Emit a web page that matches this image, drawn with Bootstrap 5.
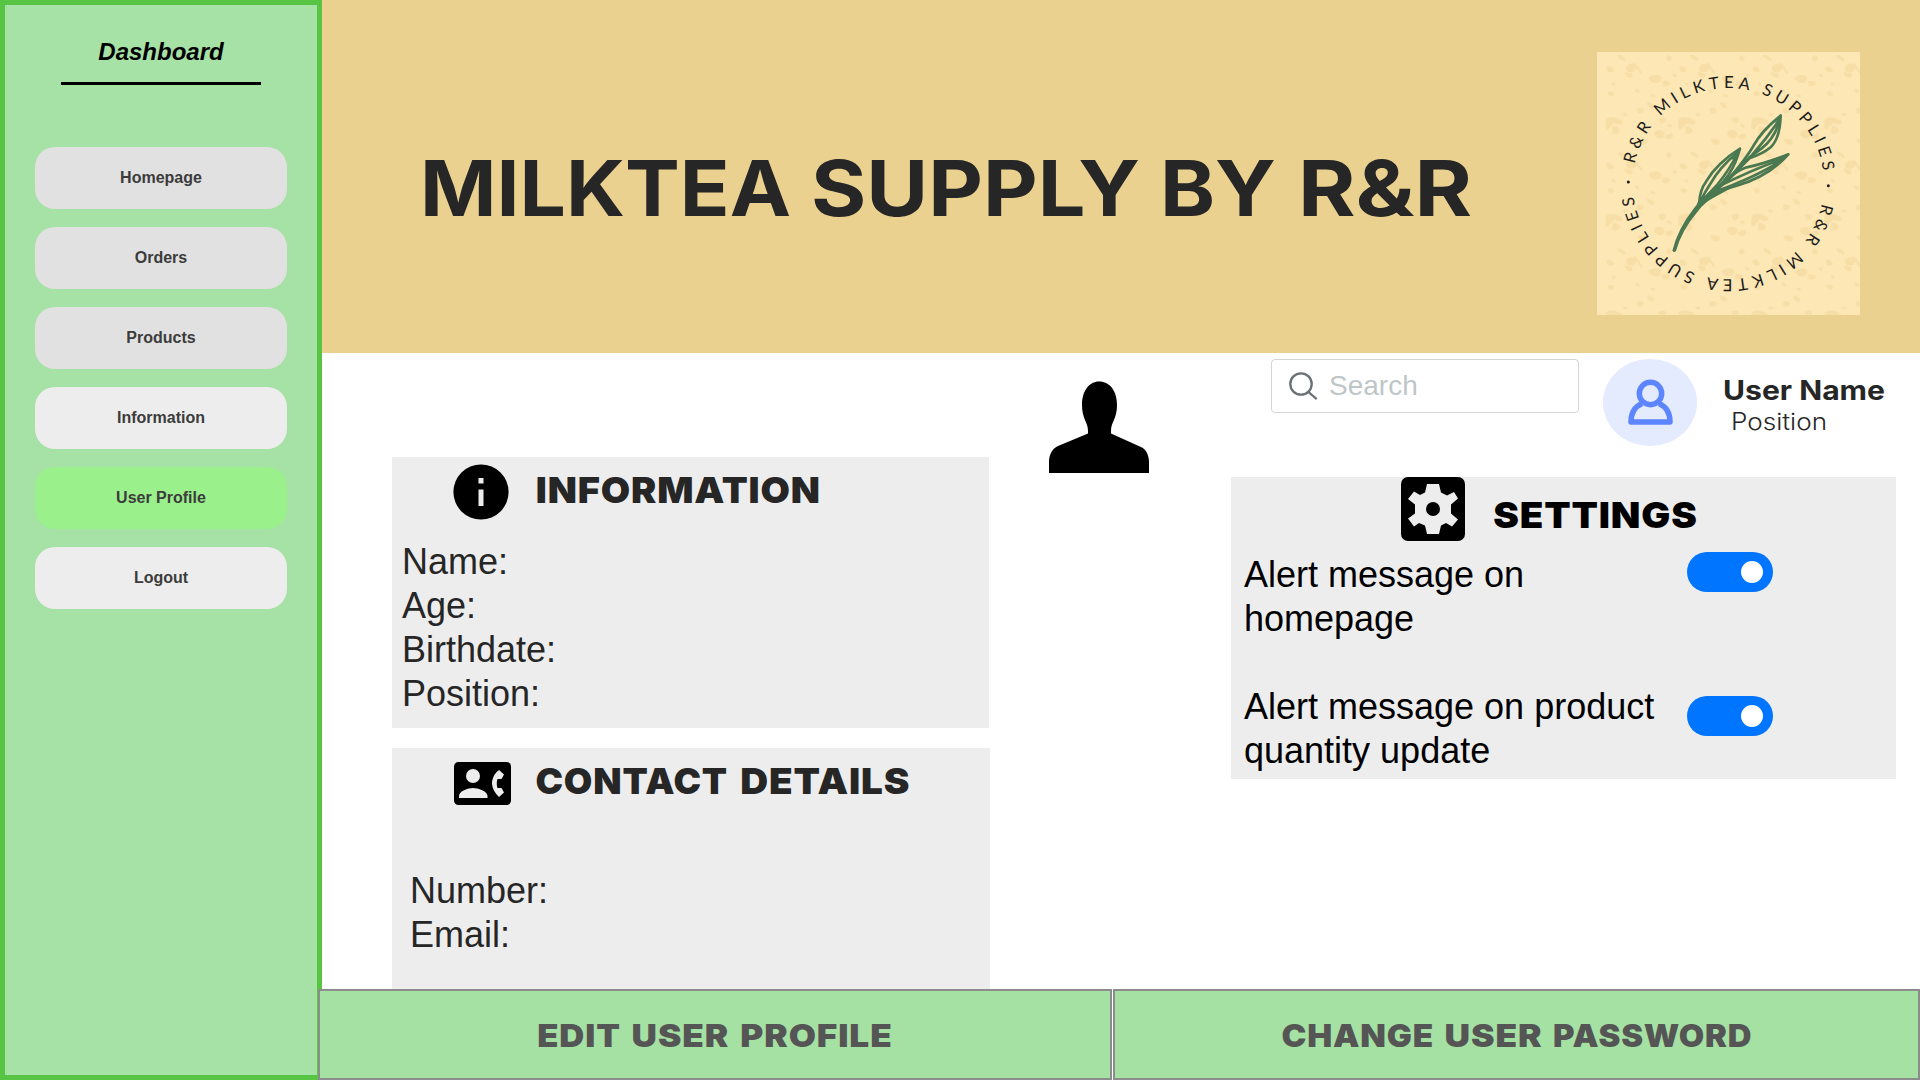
<!DOCTYPE html>
<html lang="en">
<head>
<meta charset="utf-8">
<meta name="viewport" content="width=device-width, initial-scale=1">
<title>Milktea Supply by R&amp;R</title>
<link rel="stylesheet" href="https://cdn.jsdelivr.net/npm/bootstrap@5.3.0/dist/css/bootstrap.min.css">
<style>
body{font-family:"Liberation Sans",Arial,sans-serif;width:1920px;height:1080px;overflow:hidden;background:#fff}
svg{display:block;flex:none;overflow:visible}
svg text{white-space:pre}
.side-bar{width:322px;height:1080px;background:#a6e1a6;border:5px solid #57c443;padding:29px 30px 0}
.dash-title{font-size:24px;line-height:36px;font-weight:700;font-style:italic;color:#000}
.dash-rule{width:200px;height:3px;background:#000;margin:12px auto 62px}
.side-btn{height:62px;border-radius:20px;background:#e1e1e1;color:#3c3c3c;font-size:16px;font-weight:700;border:0;padding:0}
.side-btn.lite{background:#ededed}
.side-btn.on{background:#9af08b}
.side-list{gap:18px}
.banner{height:353px;background:#ead18f;padding:52px 60px 0 0}
.banner-title{margin:74px 0 0 98px}
.work{height:636px}
.left-col{width:598px;margin-left:70px;padding-top:104px}
.mid-col{width:100px;margin-left:59px;padding-top:28px}
.right-col{width:689px;margin-left:82px;padding-top:6px}
.panel{background:#ededed;color:#262626}
.info-panel{width:597px;height:271px;padding:7px 0 0 10px}
.contact-panel{height:241px;margin-top:20px;padding:4px 0 0 18px}
.lines{font-size:36px;line-height:44px}
.info-panel .head{padding-left:51px;height:76px}
.contact-panel .head{padding-left:44px;height:117px}
.contact-icon{margin-top:10px}
.set-panel{width:665px;height:302px;margin-top:31px;padding-left:13px;color:#000}
.set-panel .head{padding-left:157px;height:75px}
.set-text{width:443px;padding-top:1px}
.find{width:308px;height:54px;margin-left:40px;border:1px solid #d3d6d6;border-radius:4px;padding:12px 0 0 17px}
.find-label{font-size:28px;line-height:28px;color:#bfc6c8;margin-left:11px}
.foot-bar{height:91px;margin-left:-4px;gap:1px;position:relative}
.foot-btn{background:#a6e1a4;border:2px solid #8c8c8c;border-radius:0;height:91px;padding:0}
.foot-a{width:794px}
.foot-b{width:807px}
.black{font-family:Inter,"Liberation Sans",sans-serif;font-weight:900;font-size:35.8px;fill:#262626;letter-spacing:.8px}
.set-panel .black{fill:#000}
.foot-btn .black{font-size:31.600px;fill:#555}
.geo{font-family:Inter,"Liberation Sans",sans-serif;fill:#262626}
.ring{font-family:Lato,sans-serif;font-size:50px;fill:#1c1c1c}
</style>
<script src="https://cdn.jsdelivr.net/npm/bootstrap@5.3.0/dist/js/bootstrap.bundle.min.js"></script>
</head>
<body>
<div class="d-flex">
  <nav class="side-bar flex-shrink-0">
    <div class="dash-title text-center">Dashboard</div>
    <div class="dash-rule"></div>
    <div class="side-list d-flex flex-column">
      <button class="btn side-btn">Homepage</button>
      <button class="btn side-btn">Orders</button>
      <button class="btn side-btn">Products</button>
      <button class="btn side-btn lite">Information</button>
      <button class="btn side-btn on">User Profile</button>
      <button class="btn side-btn lite">Logout</button>
    </div>
  </nav>
  <main class="flex-grow-1">
    <header class="banner d-flex justify-content-between align-items-start">
      <h1 class="banner-title">
        <svg width="1060" height="120"><g class="geo" font-size="77" font-weight="700"><text x="0" y="90" textLength="371" lengthAdjust="spacingAndGlyphs">MILKTEA</text><text x="391" y="90" textLength="329" lengthAdjust="spacingAndGlyphs">SUPPLY</text><text x="740" y="90" textLength="116" lengthAdjust="spacingAndGlyphs">BY</text><text x="878" y="90" textLength="174" lengthAdjust="spacingAndGlyphs">R&amp;R</text></g></svg>
      </h1>
      <svg width="263" height="263" viewBox="51 36 789 789">
        <defs>
          <pattern id="speck" x="76" y="36" width="219" height="290" patternUnits="userSpaceOnUse">
            <g fill="#f6dca3" opacity=".85">
              <path d="M3 48q8-10 16-2l8 10q-8 8-18 4zM35 10q12-4 22 8t-4 8q-14-4-18-16zM62 45q10-14 24-8 10 6 4 18-14 10-26 2zM58 60l22 4q6 12-6 14-16-4-16-18zM84 34l6-1 22 31-6 2zM130 76q18-12 36-4 6 14-8 20-22 4-28-16zM170 88q18-4 26 6-10 12-24 8zM186 10q16 0 12 14-12 8-16-4z"/>
              <path d="M6 122q12-8 20 2 0 12-14 8zM88 112q12-4 16 10-10 4-16-10zM2 200q20-8 36 0 14 4 14 14-12 8-24-2-12 8-20 22-12-4-8-20zM22 222q18 0 22 16-14 14-24 4zM94 170q14-6 22 4-4 14-20 8zM124 150q16 0 24 14l-8 6q-14-6-16-20zM158 200q16-10 24 0 0 16-16 14z"/>
              <path d="M146 240q18-12 30 0 6 16-12 20-18-2-18-20zM178 252l20-8q10 8 0 16-14 6-20-8zM96 262q20-8 30 6l-6 10q-20 0-24-16zM54 182l12 3-2 8-12-3zM136 126l14 4-2 7-12-4zM188 214l12 6-4 8-10-6zM206 64l8 7-5 6-7-6zM22 90l9 5-4 7-8-4z"/>
            </g>
          </pattern>
          <path id="arcTop" d="M164.200 371.800A287 287 0 0 1 732 431"/>
          <path id="arcLow" d="M725.800 490.200A287 287 0 0 1 158 431"/>
        </defs>
        <rect x="51" y="36" width="789" height="789" fill="#fce7b5"/>
        <rect x="76" y="36" width="764" height="789" fill="url(#speck)"/>
        <text class="ring"><textPath href="#arcTop" textLength="803" lengthAdjust="spacing">R&amp;R MILKTEA SUPPLIES</textPath></text>
        <text class="ring"><textPath href="#arcLow" textLength="803" lengthAdjust="spacing">R&amp;R MILKTEA SUPPLIES</textPath></text>
        <circle cx="145" cy="426" r="4.500" fill="#1c1c1c"/><circle cx="745" cy="437" r="4.500" fill="#1c1c1c"/>
        <g fill="none" stroke="#4a7850" stroke-width="8" stroke-linecap="round" stroke-linejoin="round">
          <path d="M602 227Q545 272 520 318 498 356 440 425M602 227Q600 295 572 322 548 342 508 355L440 425"/>
          <path d="M595 255Q578 300 545 325L508 352M598 240Q560 295 512 350"/>
          <path d="M480 326Q410 370 378 425 360 450 358 485M480 326Q462 390 430 425 395 465 370 482"/>
          <path d="M472 338Q420 380 392 430 376 455 366 474M475 336Q448 390 412 434L370 478"/>
          <path d="M625 343Q550 372 500 382 465 394 430 430M625 343Q565 410 470 437 410 453 375 480"/>
          <path d="M608 357Q520 388 415 440M600 364Q525 412 400 457"/>
        </g>
        <path d="M575 362L626 341 590 378zM454 354L482 323 468 372zM586 248L603 225 600 268zM500 354L436 420 384 462 356 480Q352 494 340 507 293 567 277 632 282 640 288 633 304 572 355 512 374 488 398 475L450 446 420 446 440 428 462 402 522 347z" fill="#4a7850"/>
      </svg>
    </header>
    <section class="work d-flex align-items-start">
      <div class="left-col">
        <div class="panel info-panel">
          <div class="head d-flex align-items-start">
            <svg width="56" height="56" viewBox="0 0 56 56"><circle cx="28" cy="28" r="27.6"/><path d="M25.500 14h5v5.500h-5zM25.500 25.500h5V42h-5z" fill="#ededed"/></svg>
            <svg width="330" height="50"><text class="black" x="26.800" y="38.700" textLength="285" lengthAdjust="spacingAndGlyphs">INFORMATION</text></svg>
          </div>
          <div class="lines">Name:<br>Age:<br>Birthdate:<br>Position:</div>
        </div>
        <div class="panel contact-panel">
          <div class="head d-flex align-items-start">
            <svg class="contact-icon" width="57" height="43" viewBox="0 0 57 43"><rect width="57" height="43" rx="4.5"/><g fill="#ededed"><circle cx="19" cy="14" r="7"/><path d="M5 36v-2c0-5 9-8 14-8s14.500 3 14.500 8v2zM45 8l5 4.500-2.500 4.500h-4c-1 3-1 6 0 9h4L50 30.500 45 35c-3-3-6.500-7-7-13.500C38 15 42 10 45 8z"/></g></svg>
            <svg width="420" height="60"><text class="black" x="24.500" y="41.900" textLength="192.500" lengthAdjust="spacingAndGlyphs">CONTACT</text><text class="black" x="229.300" y="41.900" textLength="170" lengthAdjust="spacingAndGlyphs">DETAILS</text></svg>
          </div>
          <div class="lines">Number:<br>Email:</div>
        </div>
      </div>
      <div class="mid-col">
        <svg width="100" height="92" viewBox="0 0 100 92"><path d="M50 .5C61 .5 68 10 68 24 68 38 62 41 62 50V52.500L93 66.500C97 69 100 74 100 81V92H0V81C0 73 4 67 9 65L39 52.500V50C39 41 33 38 33 24 33 10 40 .5 50 .5z"/></svg>
      </div>
      <div class="right-col">
        <div class="d-flex align-items-start">
          <div class="find d-flex align-items-start">
            <svg width="29" height="29" viewBox="0 0 29 29" fill="none" stroke="#6b7075" stroke-width="2.300"><circle cx="12" cy="12" r="10.700"/><path d="M19.500 20L27.700 27.200"/></svg>
            <span class="find-label">Search</span>
          </div>
          <svg class="ms-4" width="94" height="87" viewBox="0 0 94 87"><ellipse cx="47" cy="43.500" rx="47" ry="43.500" fill="#e4ebff"/><g fill="none" stroke="#5c85ff" stroke-width="5.500" stroke-linejoin="round"><ellipse cx="47.500" cy="34.500" rx="11.200" ry="11.200"/><path d="M39 44.500C31 48 28 54 28 63H67C67 54 64 48 56 44.500"/></g></svg>
          <svg width="200" height="87"><text class="geo" x="26" y="41" font-size="27" font-weight="700" textLength="162" lengthAdjust="spacingAndGlyphs">User Name</text><text class="geo" x="34" y="71" font-size="23.500" font-weight="300" textLength="96" lengthAdjust="spacingAndGlyphs">Position</text></svg>
        </div>
        <div class="panel set-panel">
          <div class="head d-flex align-items-start">
            <svg width="64" height="64" viewBox="0 0 64 64"><rect width="64" height="64" rx="7"/><path transform="translate(32 32)" fill="#ededed" d="M-6-25H6L8-16.500 14-13.500 21-17 25-10.500 18-4.500V4.500L25 10.500 19 17.500 13 14 8 16.500 6 25H-6L-8 16.500-14 14-19 17.500-25 9.500-18 4.500V-4.500L-25-10-19-17.500-13-14-8-16.500z"/><circle cx="32" cy="32" r="7"/></svg>
            <svg width="240" height="60"><text class="black" x="28.200" y="50.700" textLength="204.500" lengthAdjust="spacingAndGlyphs">SETTINGS</text></svg>
          </div>
          <div class="d-flex align-items-start">
            <div class="set-text lines">Alert message on<br>homepage<br><br>Alert message on product<br>quantity update</div>
            <svg width="86" height="190" viewBox="0 0 86 190"><g fill="#0075ff"><rect width="86" height="40" rx="20"/><rect y="144" width="86" height="40" rx="20"/></g><circle cx="65" cy="20" r="11" fill="#fff"/><circle cx="65" cy="164" r="11" fill="#fff"/></svg>
          </div>
        </div>
      </div>
    </section>
    <footer class="foot-bar d-flex">
      <button class="btn foot-btn foot-a"><svg width="790" height="87"><g class="black"><text x="217.300" y="55.700" textLength="83.500" lengthAdjust="spacingAndGlyphs">EDIT</text><text x="311.600" y="55.700" textLength="97.500" lengthAdjust="spacingAndGlyphs">USER</text><text x="420.300" y="55.700" textLength="152.300" lengthAdjust="spacingAndGlyphs">PROFILE</text></g></svg></button>
      <button class="btn foot-btn foot-b"><svg width="803" height="87"><g class="black"><text x="166.400" y="55.700" textLength="152.600" lengthAdjust="spacingAndGlyphs">CHANGE</text><text x="329.600" y="55.700" textLength="98" lengthAdjust="spacingAndGlyphs">USER</text><text x="438" y="55.700" textLength="199.400" lengthAdjust="spacingAndGlyphs">PASSWORD</text></g></svg></button>
    </footer>
  </main>
</div>
</body>
</html>
